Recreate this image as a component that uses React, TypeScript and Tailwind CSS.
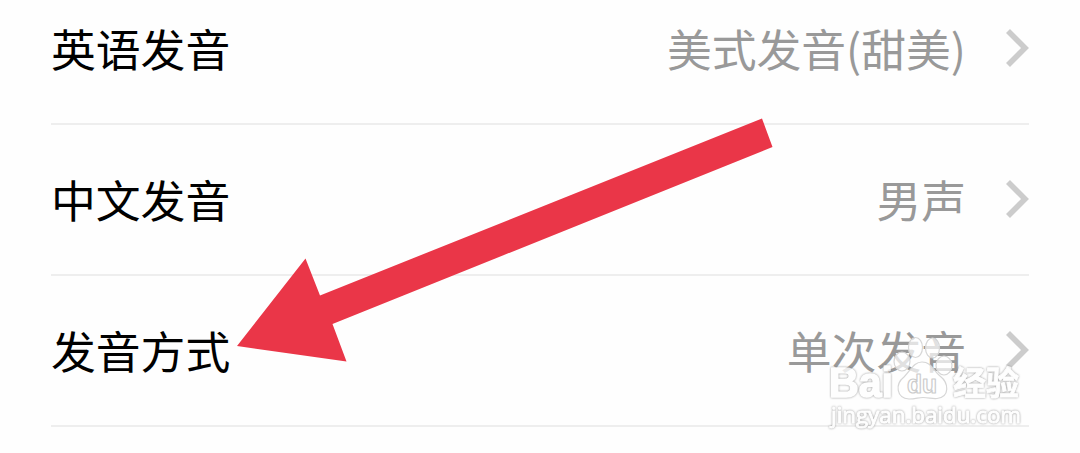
interface SettingRowProps {
  label: string
  value: string
}

const settings: SettingRowProps[] = [
  { label: "英语发音", value: "美式发音(甜美)" },
  { label: "中文发音", value: "男声" },
  { label: "发音方式", value: "单次发音" },
]

function Chevron() {
  return (
    <svg className="ml-[39px] h-[40px] w-[24px]" viewBox="0 0 24 40" fill="none">
      <path d="M3 3 L20 20 L3 37" stroke="#cccccc" strokeWidth="5.6" />
    </svg>
  )
}

function SettingRow({ label, value }: SettingRowProps) {
  return (
    <div className="flex h-[151px] items-center border-b-2 border-[#eeeeee] text-[44.8px] leading-none">
      <span className="text-black">{label}</span>
      <div className="ml-auto flex items-center text-[#999999]">
        <span>{value}</span>
        <Chevron />
      </div>
    </div>
  )
}

function Arrow() {
  return (
    <svg className="absolute left-0 top-0 h-[453px] w-[1080px]" viewBox="0 0 1080 453">
      <polygon points="237,346 305.5,258.5 320,295.5 762,118.5 772.5,147 332.5,324 346.5,361.5" fill="#ea3648" />
    </svg>
  )
}

function Watermark() {
  return (
    <svg
      className="absolute left-[820px] top-[330px] h-[105px] w-[215px]"
      viewBox="820 330 215 105"
      fill="#ffffff"
      strokeLinejoin="round"
    >
      <g fillOpacity="0.7" stroke="#d6d6d6" strokeWidth="1.2">
        <ellipse cx="902" cy="361.5" rx="8" ry="9.5" />
        <ellipse cx="915.5" cy="347.5" rx="7" ry="10" />
        <ellipse cx="932.5" cy="348" rx="7" ry="10" />
        <ellipse cx="944" cy="365.5" rx="8" ry="9.5" />
        <path d="M922 362 C914 362 911 370 904 377 C895 384 896 398 909 399 C916 399 918 397.500 923 397.500 C929 397.500 932 399 937 398.500 C950 397 949 383 940 376 C933 370 931 362 922 362 Z" />
      </g>
      <g className="drop-shadow-[0_0_1px_#808080]" opacity="0.8" stroke="#ffffff" strokeWidth="1.6">
        <text
          className="font-['Liberation_Sans',sans-serif] font-bold"
          x="829"
          y="397"
          fontSize="42"
          textLength="64"
          lengthAdjust="spacingAndGlyphs"
        >
          Bai
        </text>
        <text
          className="font-['Noto_Sans_CJK_SC',sans-serif] font-bold"
          x="953"
          y="395"
          fontSize="33"
          strokeWidth="0.8"
          textLength="66"
          lengthAdjust="spacingAndGlyphs"
        >
          经验
        </text>
        <text
          className="font-['Open_Sans',sans-serif]"
          x="831"
          y="423"
          fontSize="21"
          strokeWidth="0.9"
          textLength="190"
          lengthAdjust="spacingAndGlyphs"
        >
          jingyan.baidu.com
        </text>
      </g>
      <text
        className="font-['Liberation_Sans',sans-serif] font-bold"
        x="907"
        y="393"
        fontSize="25"
        stroke="#cccccc"
        strokeWidth="1.2"
        textLength="30"
        lengthAdjust="spacingAndGlyphs"
      >
        du
      </text>
    </svg>
  )
}

export default function App() {
  return (
    <div className="relative h-[453px] w-[1080px] overflow-hidden bg-[#fefefe] font-['Noto_Sans_CJK_SC',sans-serif]">
      <div className="-mt-[26px] px-[51px]">
        {settings.map((item) => (
          <SettingRow key={item.label} label={item.label} value={item.value} />
        ))}
      </div>
      <Arrow />
      <Watermark />
    </div>
  )
}
